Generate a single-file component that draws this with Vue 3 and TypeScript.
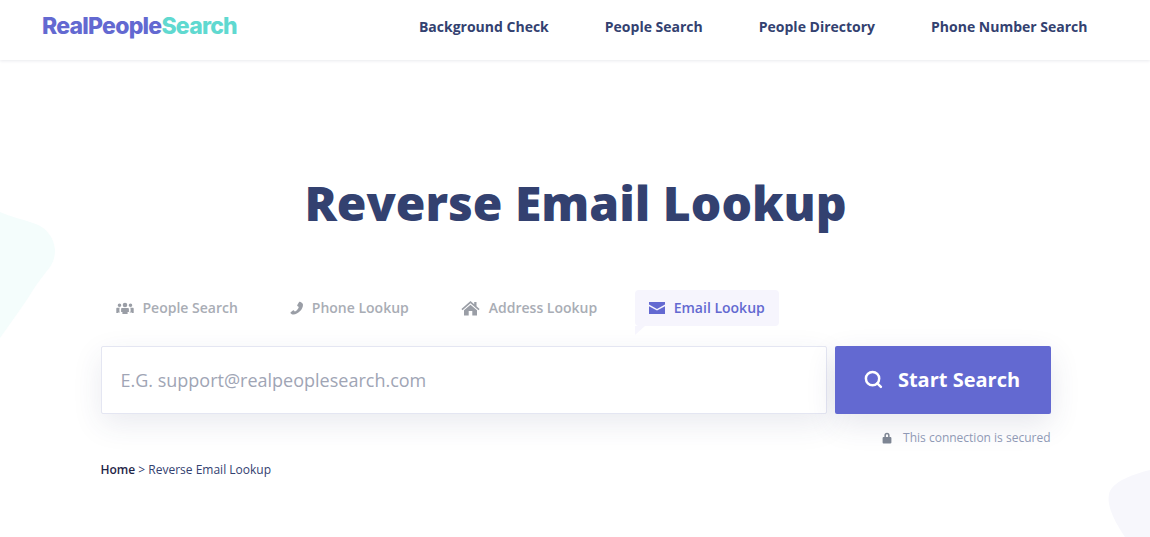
<template>
  <div class="page">
    <!-- background blobs -->
    <svg class="blob blob-left" width="56" height="130" viewBox="0 0 56 130">
      <path d="M0 3 C11 8 22 10 33 14 C46 18 54 28 55 41 C55 50 52 55 50 58 C44 66 38 73 33 81 C24 96 12 112 0 129 Z" fill="#f4fdfc" />
    </svg>
    <svg class="blob blob-right" width="44" height="68" viewBox="0 0 44 68">
      <path d="M44 1 C28 5 10 11 4 22 C-1 34 8 52 19 68 L44 68 Z" fill="#f7f7fc" />
    </svg>

    <header class="topbar">
      <a class="logo">Real<span class="logo-people">People</span><span class="logo-search">Search</span></a>
      <nav class="nav">
        <a v-for="link in navLinks" :key="link">{{ link }}</a>
      </nav>
    </header>

    <main class="content">
      <h1>Reverse Email Lookup</h1>

      <div class="tabs">
        <div v-for="tab in tabs" :key="tab.label" class="tab" :class="{ active: tab.active }">
          <svg class="tab-icon" :width="tab.w" height="16" :viewBox="tab.box">
            <path :d="tab.icon" fill="currentColor" />
          </svg>
          <span>{{ tab.label }}</span>
        </div>
      </div>

      <div class="search-row">
        <input class="email-input" type="text" placeholder="E.G. support@realpeoplesearch.com" />
        <button class="search-btn" type="button">
          <svg width="19" height="19" viewBox="0 0 20 20" fill="none" stroke="#fff">
            <circle cx="9" cy="9" r="7" stroke-width="2.6" />
            <path d="M14 14 L17.8 17.8" stroke-width="2.6" stroke-linecap="round" />
          </svg>
          <span>Start Search</span>
        </button>
      </div>

      <div class="secured">
        <svg width="10" height="12" viewBox="0 0 10 12">
          <path d="M2.4 5V3.4a2.6 2.6 0 0 1 5.2 0V5h.9c.5 0 .9.4.9.9v4.6c0 .5-.4.9-.9.9h-7c-.5 0-.9-.4-.9-.9V5.900c0-.5.4-.9.9-.9h.9zM3.900 5h2.200V3.400a1.100 1.100 0 0 0-2.200 0V5z" fill="#7d8593" />
        </svg>
        <span>This connection is secured</span>
      </div>

      <div class="crumbs"><a>Home</a> &gt; Reverse Email Lookup</div>
    </main>
  </div>
</template>

<script setup lang="ts">
const navLinks = ["Background Check", "People Search", "People Directory", "Phone Number Search"];

const tabs = [
  {
    label: "People Search",
    w: 18,
    box: "0 0 18 16",
    active: false,
    icon: "M9 2.700a2.300 2.300 0 1 1 0 4.600 2.300 2.300 0 0 1 0-4.600zM3.500 3.500a1.800 1.800 0 1 1 0 3.600 1.800 1.800 0 0 1 0-3.600zM14.500 3.500a1.800 1.800 0 1 1 0 3.600 1.800 1.800 0 0 1 0-3.600zM6.200 8h5.600c.7 0 1.100.5 1.100 1.100v2.900h-1.300v2H6.400v-2H5.100V9.100C5.100 8.500 5.500 8 6.200 8zM1.300 7.700h2.700c-.4.3-.6.800-.6 1.300v2.800h.4v.8H2.100V13.100H.3V8.700c0-.6.4-1 1-1zM14 7.700h2.700c.6 0 1 .4 1 1v4.400h-1.800v-.5h-2.200v-.8h.9V9c0-.5-.2-1-.6-1.300z",
  },
  {
    label: "Phone Lookup",
    w: 14,
    box: "-0.6 0 14 16",
    active: false,
    icon: "M13.400 4.800c0 4.700-5 9.700-9.600 9.700-1 0-2.100-.5-2.800-1.300-.3-.3-.2-.7.100-1l2.200-1.700c.3-.2.700-.2 1 .1l.9 1c1.700-.8 3.500-2.900 4-4.700L7.800 6c-.3-.3-.3-.7-.1-1l1.800-3c.2-.3.6-.4.900-.2 1.400.8 3 1.400 3 3z",
  },
  {
    label: "Address Lookup",
    w: 19,
    box: "0 0 19 16",
    active: false,
    icon: "M9.500 1 L13.200 4.200 V2 H15.500 V6.200 L18.600 9 L17.500 10.200 L9.500 3.300 L1.500 10.200 L.4 9 Z M9.500 4.700 L16 10.300 V15.500 H11.300 V11 H7.700 V15.500 H3 V10.300 Z",
  },
  {
    label: "Email Lookup",
    w: 16,
    box: "0 0 16 16",
    active: true,
    icon: "M0 2h16v2.600L8 9 0 4.600V2zM0 6.200l8 4.400 8-4.400V14H0V6.200z",
  },
];
</script>

<style>
html,
body {
  margin: 0;
  background: #fff;
}
</style>

<style scoped>
.page {
  position: relative;
  height: 537px;
  overflow: hidden;
  background: #fff;
  font-family: "Open Sans", "Liberation Sans", sans-serif;
  color: #334170;
}

.blob {
  position: absolute;
}

.blob-left {
  left: 0;
  top: 209px;
}

.blob-right {
  right: 0;
  top: 469px;
}

.topbar {
  position: relative;
  height: 60px;
  display: flex;
  align-items: center;
  justify-content: space-between;
  padding: 0 62.5px 0 42px;
  box-shadow: 0 1px 3px rgba(40, 50, 90, 0.1);
  background: #fff;
}

.logo {
  font-family: Inter, "Open Sans", sans-serif;
  font-weight: 800;
  font-size: 23px;
  letter-spacing: -0.75px;
  color: #6369d1;
  margin-top: -9px;
}

.logo-search {
  color: #60d9d0;
}

.nav {
  display: flex;
  gap: 56px;
  margin-top: -7px;
}

.nav a {
  font-size: 14px;
  font-weight: 700;
  color: #334170;
}

.content {
  position: relative;
  width: 950px;
  margin: 0 auto;
  padding-left: 1px;
}

h1 {
  margin: 110px 0 0;
  text-align: center;
  font-size: 48px;
  line-height: 65px;
  font-weight: 800;
  color: #334170;
}

.tabs {
  display: flex;
  gap: 21px;
  margin-top: 55px;
}

.tab {
  position: relative;
  display: flex;
  align-items: center;
  gap: 9px;
  box-sizing: border-box;
  height: 36px;
  padding: 0 15px 1px;
  border-radius: 4px;
  font-size: 14px;
  font-weight: 600;
  color: #a9adb5;
}

.tab:nth-child(3) {
  margin-left: 1px;
}

.tab-icon {
  color: #9a9ea6;
}

.tab.active {
  gap: 8.5px;
  background: #f6f5fd;
  color: #6369d1;
  padding: 0 14px 1px;
  margin-left: 2px;
}

.tab.active .tab-icon {
  color: #6369d1;
}

.tab.active::after {
  content: "";
  position: absolute;
  left: 0;
  top: 36px;
  border-top: 9px solid #f6f5fd;
  border-right: 10px solid transparent;
}

.search-row {
  display: flex;
  gap: 8px;
  margin-top: 20px;
  height: 68px;
}

.email-input {
  flex: 1;
  min-width: 0;
  box-sizing: border-box;
  height: 68px;
  padding: 0 19px;
  border: 1px solid #e4e6f2;
  border-radius: 2px;
  outline: none;
  background: #fff;
  font-family: inherit;
  font-size: 18px;
  color: #334170;
  box-shadow: 0 10px 30px rgba(50, 55, 110, 0.1);
}

.email-input::placeholder {
  color: #a0a5b5;
  opacity: 1;
}

.search-btn {
  width: 216px;
  display: flex;
  align-items: center;
  justify-content: center;
  gap: 15px;
  border: 0;
  border-radius: 2px;
  padding: 0 1px 2px 0;
  background: #6369d1;
  color: #fff;
  font-family: inherit;
  font-size: 20px;
  font-weight: 700;
  box-shadow: 0 10px 30px rgba(50, 55, 110, 0.12);
}

.secured {
  display: flex;
  justify-content: flex-end;
  align-items: center;
  gap: 11px;
  margin-top: 15px;
  font-size: 12px;
  line-height: 17px;
  color: #8f99b5;
}

.crumbs {
  margin-top: 15px;
  font-size: 12px;
  line-height: 17px;
  color: #334170;
}

.crumbs a {
  color: #1f2547;
  font-weight: 600;
}
</style>
